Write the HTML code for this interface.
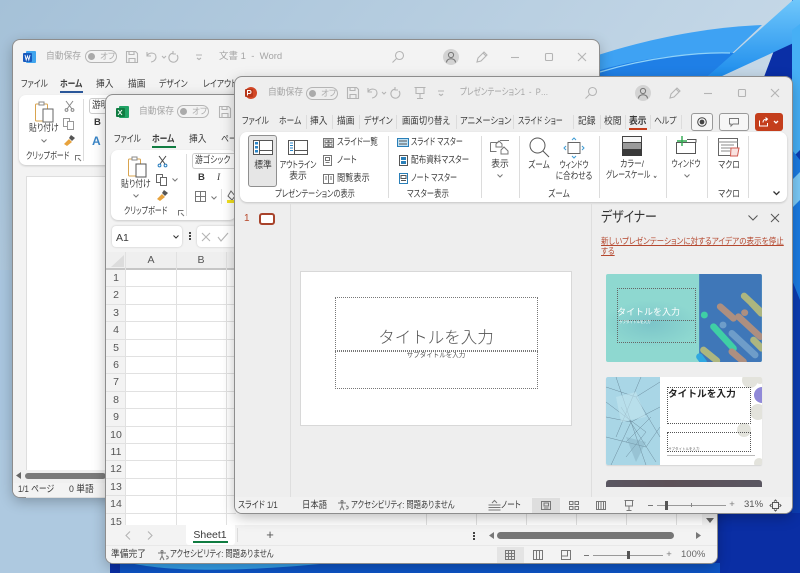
<!DOCTYPE html>
<html lang="ja"><head><meta charset="utf-8"><title>Office</title>
<style>
html,body{margin:0;padding:0;width:800px;height:573px;overflow:hidden;background:#a9c4da}
*{box-sizing:border-box}
body{font-family:"Liberation Sans","Noto Sans CJK JP",sans-serif;font-size:9.5px;color:#3a3a3a;font-feature-settings:"palt";position:relative}
.t{position:absolute;white-space:nowrap;line-height:14px;height:14px;--s:.82;transform:scaleX(var(--s));transform-origin:0 50%}
.k{--s:.74}
.j{--s:.92}
.n{--s:1}
.c{transform:translateX(-50%) scaleX(var(--s));transform-origin:50% 50%}
.g{color:#a5a5a5}
.b{position:absolute}
.win{position:absolute;border-radius:7px;box-shadow:0 0 0 1px #8d8d8d,0 4px 14px rgba(0,0,0,.28)}
.rib{position:absolute;background:#fff;border-radius:7px;box-shadow:0 1px 2px rgba(0,0,0,.18)}
.tog{position:absolute;width:32px;height:13px;border:1px solid #b5b5b5;border-radius:7px}
.tog i{position:absolute;left:2px;top:2px;width:7px;height:7px;border-radius:50%;background:#aaa}
.tog span{position:absolute;left:14px;top:-1px;font-size:8.5px;line-height:12px;color:#aaa}
.sep{position:absolute;width:1px;background:#dcdcdc}
svg{position:absolute;overflow:visible}
.ic{fill:none;stroke:#777;stroke-width:1}
.ti{fill:none;stroke:#b4b4b4;stroke-width:1.1}
.hl{position:absolute;height:1px;background:#e1e1e1}
.vl{position:absolute;width:1px;background:#e1e1e1}
.r{font-size:10.5px;color:#555;--s:1}
</style></head><body>
<svg width="800" height="573" style="left:0;top:0">
<defs><linearGradient id="w0" x1="0" y1="0" x2="1" y2=".6"><stop offset="0" stop-color="#a5c1d8"/><stop offset="1" stop-color="#cfdfec"/></linearGradient>
<linearGradient id="w2" x1="0" y1="0" x2="0" y2="1"><stop offset="0" stop-color="#6fc7fb"/><stop offset="1" stop-color="#1d8cec"/></linearGradient></defs>
<rect width="800" height="573" fill="url(#w0)"/>
<rect x="0" y="270" width="110" height="303" fill="#a9c6df"/>
<path d="M595 56C650 38 710 27 762 25L707 77H595Z" fill="#3ea2f3"/>
<path d="M600 70C650 56 700 52 735 53L707 77H600Z" fill="#1f7fe6"/>
<path d="M600 72C650 57 700 52 730 53" fill="none" stroke="#8fd2f8" stroke-width="1.2"/>
<path d="M793 0H800V573H100V560L680 300Z" fill="#0a2fa6"/>
<rect x="792" y="0" width="8" height="573" fill="#0c3db2"/>
<path d="M793 0H800V40L720 77H707Z" fill="url(#w2)"/>
<path d="M792 30L800 24V150L792 158Z" fill="#46aff5"/>
<path d="M792 150L800 160V300L792 280Z" fill="#1a7be2"/>
<path d="M792 180L800 172V200L792 208Z" fill="#7ccbf8"/>
<rect x="717" y="513" width="83" height="60" fill="#0a2ea4"/>
<rect x="120" y="563" width="600" height="10" fill="#0d55c8"/>
<path d="M130 563C170 572 240 572 330 563Z" fill="#37a2ec"/>
<path d="M0 440H110V573H0Z" fill="#aec9e0"/>
</svg>

<!-- WORD -->
<div class="win" style="left:13px;top:40px;width:586px;height:457px;background:#f3f3f3"></div>
<svg width="14" height="13" style="left:23px;top:51px"><rect x="3" y="0" width="10" height="12" rx="1" fill="#41a5ee"/><rect x="0" y="2" width="9" height="9" rx="1" fill="#185abd"/><path d="M2 4l1.2 5 1.3-4 1.3 4L7 4" fill="none" stroke="#fff" stroke-width=".9"/></svg>
<span class="t g j" style="left:46px;top:50px">自動保存</span>
<div class="tog" style="left:85px;top:50px"><i></i><span>オフ</span></div>
<svg width="12" height="12" style="left:126px;top:51px" class="ti"><path d="M.5.5h9l2 2v9H.5zM3 .5v3h5v-3M3 11.5v-4h6v4"/></svg>
<svg width="34" height="12" style="left:146px;top:51px" class="ti"><path d="M1 1v4h4M1 5c2-4 9-4 9 1 0 3-3 5-5 5"/><path d="M16 5l2 2 2-2M27 2.200A4.500 4.500 0 1 0 31 4M27 0v3h3"/></svg>
<svg width="8" height="6" style="left:195px;top:54px" class="ti"><path d="M1 1h6M2 4l2 1.500L6 4"/></svg>
<span class="t g n" style="left:219px;top:50px">文書 1 &nbsp;-&nbsp; Word</span>
<svg width="12" height="12" style="left:392px;top:51px" class="ti"><circle cx="7.500" cy="4.500" r="4"/><path d="M4.500 7.500L.5 11.500"/></svg>
<div class="b" style="left:443px;top:49px;width:16px;height:16px;border-radius:50%;background:#d3d3d3"></div>
<svg width="10" height="11" style="left:446px;top:52px" class="ic"><circle cx="5" cy="3" r="2.600"/><path d="M.5 10.500c0-5 9-5 9 0"/></svg>
<svg width="12" height="12" style="left:476px;top:51px" class="ti"><path d="M1 11l1-4 6-6 3 3-6 6zM7 2l3 3"/></svg>
<svg width="8" height="2" style="left:511px;top:57px" class="ti"><path d="M0 .5h8"/></svg>
<svg width="8" height="8" style="left:545px;top:53px" class="ti"><rect x=".5" y=".5" width="7" height="7" rx="1"/></svg>
<svg width="8" height="8" style="left:578px;top:53px" class="ti"><path d="M0 0l8 8M8 0L0 8"/></svg>
<span class="t" style="left:21px;top:78px">ファイル</span>
<span class="t" style="left:60px;top:78px;font-weight:bold">ホーム</span>
<div class="b" style="left:60px;top:91px;width:23px;height:2px;background:#2b579a"></div>
<span class="t j" style="left:96px;top:78px">挿入</span>
<span class="t j" style="left:128px;top:78px">描画</span>
<span class="t" style="left:159px;top:78px">デザイン</span>
<span class="t" style="left:203px;top:78px">レイアウト</span>
<div class="rib" style="left:19px;top:95px;width:574px;height:70px"></div>
<svg width="20" height="22" style="left:35px;top:101px"><rect x=".5" y="3" width="12" height="17" rx="1" fill="none" stroke="#d9a44f"/><rect x="4" y="1" width="5" height="3" fill="#fff" stroke="#888"/><rect x="8" y="8" width="10" height="13" fill="#fff" stroke="#666"/></svg>
<span class="t" style="left:29px;top:122px">貼り付け</span>
<svg width="6" height="4" style="left:41px;top:139px" class="ic"><path d="M.5.5L3 3 5.500.5"/></svg>
<svg width="9" height="11" style="left:65px;top:101px" fill="none" stroke="#888"><path d="M1 0l6 8M8 0L2 8"/><circle cx="1.500" cy="9" r="1.400"/><circle cx="7.500" cy="9" r="1.400"/></svg>
<svg width="12" height="12" style="left:63px;top:118px" fill="#fff" stroke="#999"><rect x=".5" y=".5" width="6" height="8"/><rect x="4.500" y="3.500" width="6" height="8"/></svg>
<svg width="12" height="12" style="left:64px;top:135px"><path d="M7 0l4 3-3 3-3-3z" fill="#555"/><path d="M5 4l3 3-5 4-3-2z" fill="#e8a33d"/></svg>
<span class="t k" style="left:26px;top:150px">クリップボード</span>
<svg width="6" height="6" style="left:75px;top:155px" class="ic"><path d="M.5 5.500v-5h5M3 3l3 3"/></svg>
<div class="sep" style="left:83px;top:99px;height:62px"></div>
<div class="b" style="left:89px;top:98px;width:20px;height:16px;border:1px solid #ccc;border-radius:3px"></div>
<span class="t j" style="left:92px;top:99px">游明</span>
<span class="t n" style="left:94px;top:116px;font-weight:bold">B</span>
<span class="t n" style="left:92px;top:134px;font-weight:bold;font-size:12px;color:#3a86c8">A</span>
<div class="b" style="left:27px;top:177px;width:79px;height:320px;background:#fff;box-shadow:0 0 0 1px #dedede"></div>
<div class="b" style="left:13px;top:483px;width:93px;height:14px;background:#f3f3f3;border-radius:0 0 0 7px"></div>
<div class="b" style="left:13px;top:470px;width:93px;height:13px;background:#f0f0f0"></div>
<svg width="5" height="7" style="left:16px;top:472px"><path d="M5 0v7L0 3.500z" fill="#666"/></svg>
<div class="b" style="left:25px;top:473px;width:81px;height:6px;border-radius:3px;background:#7b7b7b"></div>
<span class="t" style="left:18px;top:483px">1/1 ページ</span>
<span class="t j" style="left:69px;top:483px">0 単語</span>

<!-- EXCEL -->
<div class="win" style="left:106px;top:95px;width:611px;height:468px;background:#f3f3f3"></div>
<svg width="14" height="13" style="left:116px;top:106px"><rect x="3" y="0" width="10" height="12" rx="1" fill="#21a366"/><rect x="0" y="2" width="9" height="9" rx="1" fill="#107c41"/><path d="M2 4l4 5M6 4L2 9" fill="none" stroke="#fff"/></svg>
<span class="t g j" style="left:139px;top:105px">自動保存</span>
<div class="tog" style="left:177px;top:105px"><i></i><span>オフ</span></div>
<svg width="12" height="12" style="left:219px;top:106px" class="ti"><path d="M.5.5h9l2 2v9H.5zM3 .5v3h5v-3M3 11.500v-4h6v4"/></svg>
<span class="t" style="left:114px;top:133px">ファイル</span>
<span class="t" style="left:152px;top:133px;font-weight:bold">ホーム</span>
<div class="b" style="left:152px;top:146px;width:24px;height:2px;background:#107c41"></div>
<span class="t j" style="left:189px;top:133px">挿入</span>
<span class="t" style="left:221px;top:133px">ページ</span>
<div class="rib" style="left:111px;top:150px;width:125px;height:70px"></div>
<svg width="20" height="22" style="left:128px;top:156px"><rect x=".5" y="3" width="12" height="17" rx="1" fill="none" stroke="#d9a44f"/><rect x="4" y="1" width="5" height="3" fill="#fff" stroke="#888"/><rect x="8" y="8" width="10" height="13" fill="#fff" stroke="#555"/></svg>
<span class="t" style="left:121px;top:178px">貼り付け</span>
<svg width="6" height="4" style="left:133px;top:194px" class="ic"><path d="M.5.5L3 3 5.500.5"/></svg>
<svg width="9" height="12" style="left:158px;top:156px" fill="none" stroke="#444"><path d="M1 0l6 8M8 0L2 8"/><circle cx="1.500" cy="9.500" r="1.400" stroke="#2a7fc0"/><circle cx="7.500" cy="9.500" r="1.400" stroke="#2a7fc0"/></svg>
<svg width="12" height="12" style="left:156px;top:174px" fill="#fff" stroke="#666"><rect x=".5" y=".5" width="6" height="8"/><rect x="4.500" y="3.500" width="6" height="8"/></svg>
<svg width="6" height="4" style="left:172px;top:178px" class="ic"><path d="M.5.5L3 3 5.500.5"/></svg>
<svg width="12" height="12" style="left:157px;top:190px"><path d="M7 0l4 3-3 3-3-3z" fill="#555"/><path d="M5 4l3 3-5 4-3-2z" fill="#e8a33d"/></svg>
<span class="t k" style="left:124px;top:205px">クリップボード</span>
<svg width="6" height="6" style="left:178px;top:210px" class="ic"><path d="M.5 5.500v-5h5M3 3l3 3"/></svg>
<div class="sep" style="left:186px;top:154px;height:62px"></div>
<div class="b" style="left:192px;top:153px;width:44px;height:16px;border:1px solid #ccc;border-radius:3px 0 0 3px;border-right:0"></div>
<span class="t" style="left:195px;top:154px">游ゴシック</span>
<span class="t n" style="left:198px;top:171px;font-weight:bold">B</span>
<span class="t n" style="left:217px;top:171px;font-style:italic;font-family:'Liberation Serif',serif">I</span>
<svg width="11" height="11" style="left:195px;top:191px" class="ic"><path d="M.5.5h10v10H.5zM5.500.5v10M.5 5.500h10"/></svg>
<svg width="6" height="4" style="left:211px;top:196px" class="ic"><path d="M.5.5L3 3 5.500.5"/></svg>
<div class="sep" style="left:221px;top:189px;height:15px"></div>
<svg width="9" height="12" style="left:227px;top:191px"><path d="M4 0l4 5-3 4-4-4z" fill="none" stroke="#666"/><rect x="0" y="9" width="9" height="3" fill="#f2e01e"/></svg>
<div class="b" style="left:112px;top:226px;width:70px;height:21px;background:#fff;border-radius:4px;box-shadow:0 0 2px rgba(0,0,0,.2)"></div>
<span class="t n" style="left:116px;top:231px;font-size:10.500px">A1</span>
<svg width="6" height="4" style="left:173px;top:235px" fill="none" stroke="#333"><path d="M.5.5L3 3 5.500.5"/></svg>
<div class="b" style="left:189px;top:232px;width:2px;height:8px;border-left:2px dotted #444"></div>
<div class="b" style="left:197px;top:226px;width:40px;height:21px;background:#fff;border-radius:4px;box-shadow:0 0 2px rgba(0,0,0,.2)"></div>
<svg width="28" height="10" style="left:201px;top:232px" class="ti"><path d="M1 1l8 8M9 1L1 9M17 5l3 4 7-8"/></svg>
<!-- grid -->
<div class="b" style="left:106px;top:252px;width:611px;height:16px;background:#efefef"></div>
<div class="b" style="left:106px;top:268px;width:19px;height:257px;background:#f3f3f3"></div>
<div class="b" style="left:125px;top:269px;width:577px;height:256px;background:#fff"></div>
<div class="b" style="left:106px;top:268px;width:596px;height:2px;background:#c6c6c6"></div>
<div class="b" style="left:702px;top:252px;width:15px;height:273px;background:#f3f3f3"></div>
<svg width="14" height="12" style="left:111px;top:255px"><path d="M13 0v12H0z" fill="#dcdcdc"/></svg>
<span class="t c r" style="left:151px;top:253px">A</span>
<span class="t c r" style="left:201px;top:253px">B</span>
<div class="vl" style="left:125px;top:252px;height:273px"></div><div class="vl" style="left:176px;top:252px;height:273px"></div><div class="vl" style="left:226px;top:252px;height:273px"></div>
<div class="vl" style="left:426px;top:513px;height:12px"></div><div class="vl" style="left:476px;top:513px;height:12px"></div><div class="vl" style="left:526px;top:513px;height:12px"></div><div class="vl" style="left:576px;top:513px;height:12px"></div><div class="vl" style="left:626px;top:513px;height:12px"></div><div class="vl" style="left:676px;top:513px;height:12px"></div>
<div class="hl" style="left:106px;top:286px;width:130px"></div><div class="hl" style="left:106px;top:304px;width:130px"></div><div class="hl" style="left:106px;top:321px;width:130px"></div><div class="hl" style="left:106px;top:339px;width:130px"></div><div class="hl" style="left:106px;top:356px;width:130px"></div><div class="hl" style="left:106px;top:373px;width:130px"></div><div class="hl" style="left:106px;top:391px;width:130px"></div><div class="hl" style="left:106px;top:408px;width:130px"></div><div class="hl" style="left:106px;top:426px;width:130px"></div><div class="hl" style="left:106px;top:443px;width:130px"></div><div class="hl" style="left:106px;top:460px;width:130px"></div><div class="hl" style="left:106px;top:478px;width:130px"></div><div class="hl" style="left:106px;top:495px;width:130px"></div><div class="hl" style="left:106px;top:513px;width:130px"></div>
<span class="t c r" style="left:116px;top:271px">1</span>
<span class="t c r" style="left:116px;top:288px">2</span>
<span class="t c r" style="left:116px;top:306px">3</span>
<span class="t c r" style="left:116px;top:323px">4</span>
<span class="t c r" style="left:116px;top:341px">5</span>
<span class="t c r" style="left:116px;top:358px">6</span>
<span class="t c r" style="left:116px;top:375px">7</span>
<span class="t c r" style="left:116px;top:393px">8</span>
<span class="t c r" style="left:116px;top:410px">9</span>
<span class="t c r" style="left:116px;top:428px">10</span>
<span class="t c r" style="left:116px;top:445px">11</span>
<span class="t c r" style="left:116px;top:462px">12</span>
<span class="t c r" style="left:116px;top:480px">13</span>
<span class="t c r" style="left:116px;top:497px">14</span>
<span class="t c r" style="left:116px;top:515px">15</span>
<svg width="8" height="6" style="left:706px;top:518px"><path d="M0 0h8L4 5z" fill="#666"/></svg>
<div class="b" style="left:106px;top:525px;width:611px;height:38px;background:#f3f3f3;border-radius:0 0 7px 7px"></div>
<div class="b" style="left:106px;top:545px;width:611px;height:1px;background:#e8e8e8"></div>
<svg width="30" height="9" style="left:125px;top:531px" class="ti"><path d="M5 .5L1 4.500l4 4M23 .5l4 4-4 4"/></svg>
<div class="b" style="left:186px;top:525px;width:49px;height:20px;background:#fff;border-radius:0 0 3px 3px"></div>
<span class="t c n" style="left:210px;top:528px;font-size:10.500px">Sheet1</span>
<div class="b" style="left:193px;top:541px;width:35px;height:2px;background:#107c41"></div>
<div class="sep" style="left:237px;top:528px;height:14px"></div>
<span class="t c n" style="left:270px;top:528px;font-size:13px;color:#555">+</span>
<div class="b" style="left:473px;top:532px;width:2px;height:8px;border-left:2px dotted #444"></div>
<svg width="5" height="7" style="left:489px;top:532px"><path d="M5 0v7L0 3.500z" fill="#777"/></svg>
<div class="b" style="left:497px;top:532px;width:177px;height:7px;border-radius:4px;background:#767676"></div>
<svg width="5" height="7" style="left:696px;top:532px"><path d="M0 0v7l5-3.500z" fill="#777"/></svg>
<span class="t j" style="left:111px;top:548px">準備完了</span>
<svg width="11" height="11" style="left:158px;top:550px" class="ic"><circle cx="4" cy="1.500" r="1"/><path d="M0 3h8M4 3v3l-2 4M4 6l2 4M8 6c3 0 3 3 0 3"/></svg>
<span class="t k" style="left:170px;top:548px;--s:.77">アクセシビリティ: 問題ありません</span>
<div class="b" style="left:497px;top:547px;width:27px;height:16px;background:#e4e4e4"></div>
<svg width="10" height="10" style="left:505px;top:550px" class="ic" stroke="#444"><path d="M.5.5h9v9h-9zM3.500.5v9M6.500.5v9M.5 3.500h9M.5 6.500h9"/></svg>
<svg width="10" height="10" style="left:533px;top:550px" class="ic"><path d="M.5.5h9v9h-9zM3.500.5v9M6.500.5v9"/></svg>
<svg width="10" height="10" style="left:561px;top:550px" class="ic"><path d="M.5.5h9v9h-9zM6.500.5v5.500h-6"/></svg>
<div class="b" style="left:584px;top:555px;width:5px;height:1px;background:#777"></div>
<div class="b" style="left:593px;top:555px;width:70px;height:1px;background:#999"></div>
<div class="b" style="left:627px;top:551px;width:3px;height:8px;background:#555"></div>
<span class="t c n" style="left:669px;top:548px;color:#777">+</span>
<span class="t n" style="left:681px;top:548px;color:#666">100%</span>

<!-- POWERPOINT -->
<div class="win" style="left:235px;top:77px;width:557px;height:436px;background:#eeeeee"></div>
<svg width="14" height="14" style="left:244px;top:86px"><circle cx="7" cy="7" r="6" fill="#d24726"/><rect x="1" y="3" width="8" height="8" rx="1" fill="#b7361a"/><path d="M3.500 9.500v-5h2a1.500 1.500 0 0 1 0 3h-2" fill="none" stroke="#fff"/></svg>
<span class="t g j" style="left:268px;top:86px">自動保存</span>
<div class="tog" style="left:306px;top:87px"><i></i><span>オフ</span></div>
<svg width="12" height="12" style="left:347px;top:87px" class="ti"><path d="M.5.5h9l2 2v9H.5zM3 .5v3h5v-3M3 11.500v-4h6v4"/></svg>
<svg width="40" height="12" style="left:367px;top:87px" class="ti"><path d="M1 1v4h4M1 5c2-4 9-4 9 1 0 3-3 5-5 5"/><path d="M15 5l2 2 2-2M28 2.200A4.500 4.500 0 1 0 32 4M28 0v3h3"/></svg>
<svg width="12" height="12" style="left:414px;top:87px" class="ti"><path d="M.5.500h11M2 .500v6h8v-6M6 6.500v5M3 11.500h6"/></svg>
<svg width="8" height="6" style="left:437px;top:90px" class="ti"><path d="M1 1h6M2 4l2 1.500L6 4"/></svg>
<span class="t g k" style="left:460px;top:86px;--s:.79">プレゼンテーション1 &nbsp;-&nbsp; P…</span>
<svg width="12" height="12" style="left:585px;top:87px" class="ti"><circle cx="7.500" cy="4.500" r="4"/><path d="M4.500 7.500L.5 11.500"/></svg>
<div class="b" style="left:635px;top:85px;width:16px;height:16px;border-radius:50%;background:#d3d3d3"></div>
<svg width="10" height="11" style="left:638px;top:88px" class="ic"><circle cx="5" cy="3" r="2.600"/><path d="M.5 10.500c0-5 9-5 9 0"/></svg>
<svg width="12" height="12" style="left:669px;top:87px" class="ti"><path d="M1 11l1-4 6-6 3 3-6 6zM7 2l3 3"/></svg>
<svg width="8" height="2" style="left:704px;top:93px" class="ti"><path d="M0 .5h8"/></svg>
<svg width="8" height="8" style="left:738px;top:89px" class="ti"><rect x=".5" y=".5" width="7" height="7" rx="1"/></svg>
<svg width="8" height="8" style="left:771px;top:89px" class="ti"><path d="M0 0l8 8M8 0L0 8"/></svg>
<span class="t" style="left:242px;top:115px">ファイル</span>
<span class="t" style="left:279px;top:115px">ホーム</span>
<span class="t j" style="left:310px;top:115px">挿入</span>
<span class="t j" style="left:337px;top:115px">描画</span>
<span class="t" style="left:364px;top:115px">デザイン</span>
<span class="t" style="left:402px;top:115px;--s:.88">画面切り替え</span>
<span class="t" style="left:460px;top:115px;--s:.87">アニメーション</span>
<span class="t k" style="left:518px;top:115px">スライド ショー</span>
<span class="t j" style="left:578px;top:115px">記録</span>
<span class="t j" style="left:604px;top:115px">校閲</span>
<span class="t j" style="left:629px;top:115px;font-weight:bold">表示</span>
<div class="b" style="left:629px;top:128px;width:18px;height:2px;background:#c43e1c"></div>
<span class="t" style="left:654px;top:115px">ヘルプ</span>
<div class="sep" style="left:306px;top:115px;height:14px"></div><div class="sep" style="left:332px;top:115px;height:14px"></div><div class="sep" style="left:359px;top:115px;height:14px"></div><div class="sep" style="left:396px;top:115px;height:14px"></div><div class="sep" style="left:456px;top:115px;height:14px"></div><div class="sep" style="left:513px;top:115px;height:14px"></div><div class="sep" style="left:573px;top:115px;height:14px"></div><div class="sep" style="left:600px;top:115px;height:14px"></div><div class="sep" style="left:625px;top:115px;height:14px"></div><div class="sep" style="left:650px;top:115px;height:14px"></div><div class="sep" style="left:681px;top:115px;height:14px"></div>
<div class="b" style="left:691px;top:113px;width:22px;height:18px;border:1px solid #999;border-radius:3px;background:#f6f6f6"></div>
<svg width="10" height="10" style="left:697px;top:117px"><circle cx="5" cy="5" r="4.300" fill="none" stroke="#444"/><circle cx="5" cy="5" r="2.400" fill="#444"/></svg>
<div class="b" style="left:719px;top:113px;width:30px;height:18px;border:1px solid #999;border-radius:3px;background:#f6f6f6"></div>
<svg width="10" height="9" style="left:729px;top:118px" class="ic" stroke="#444"><path d="M.5.5h9v5.500H4L2 8V6H.5z"/></svg>
<div class="b" style="left:755px;top:113px;width:28px;height:18px;border-radius:3px;background:#c43e1c"></div>
<svg width="22" height="10" style="left:759px;top:117px" fill="none" stroke="#fff"><path d="M.5 3.500v5.500h8V6M4 5.500C4 3 6 2 8 2M6.500.5L8.500 2 6.500 4"/><path d="M15 4l2 2 2-2" stroke-width="1.300"/></svg>
<div class="rib" style="left:240px;top:132px;width:547px;height:70px"></div>
<div class="b" style="left:248px;top:135px;width:29px;height:52px;border:1px solid #8f8f8f;border-radius:3px;background:#e6e6e6"></div>
<svg width="20" height="16" style="left:253px;top:140px"><rect x=".5" y=".5" width="19" height="14" fill="#fff" stroke="#555"/><path d="M6.500.5v14M6.500 10.500h13" stroke="#555"/><rect x="2" y="2" width="3" height="2.500" fill="#2a86c8"/><rect x="2" y="6" width="3" height="2.500" fill="#2a86c8"/><rect x="2" y="10" width="3" height="2.500" fill="#2a86c8"/></svg>
<span class="t c j" style="left:263px;top:159px">標準</span>
<svg width="20" height="16" style="left:288px;top:140px"><rect x=".5" y=".5" width="19" height="14" fill="#fff" stroke="#555"/><path d="M6.500.5v14M6.500 10.500h13" stroke="#555"/><path d="M2 3h3M2 5.500h3M2 8h3M2 10.500h3" stroke="#2a86c8"/></svg>
<span class="t c k" style="left:298px;top:159px">アウトライン</span>
<span class="t c j" style="left:298px;top:170px">表示</span>
<svg width="11" height="10" style="left:323px;top:138px" class="ic" stroke="#555"><path d="M.5.5h10v9H.5zM2 2h3v2.500H2zM6 2h3v2.500H6zM2 6h3v2.500H2zM6 6h3v2.500H6z"/></svg>
<span class="t" style="left:337px;top:136px;--s:.79">スライド一覧</span>
<svg width="9" height="11" style="left:323px;top:155px" class="ic" stroke="#555"><path d="M.5.5h8v10H.5zM2.500 2.500h4v3h-4zM2.500 7.500h4"/></svg>
<span class="t" style="left:337px;top:154px">ノート</span>
<svg width="11" height="10" style="left:323px;top:174px" class="ic" stroke="#555"><path d="M.5.5h10v9H.5zM5.500.5v9M2 3h2M2 5h2M7 3h2M7 5h2"/></svg>
<span class="t" style="left:337px;top:172px;--s:.86">閲覧表示</span>
<span class="t c" style="left:315px;top:188px;--s:.76">プレゼンテーションの表示</span>
<div class="sep" style="left:388px;top:136px;height:62px"></div>
<svg width="12" height="10" style="left:397px;top:138px"><rect x=".5" y=".5" width="11" height="8" fill="#bfe0f2" stroke="#2a7fb8"/><path d="M2 3h8M2 6h8" stroke="#555"/></svg>
<span class="t k" style="left:411px;top:136px">スライド マスター</span>
<svg width="9" height="12" style="left:399px;top:155px"><rect x=".5" y=".5" width="8" height="10" fill="#fff" stroke="#555"/><rect x="2" y="2" width="5" height="3" fill="#2a7fb8"/><rect x="2" y="6" width="5" height="3" fill="#2a7fb8"/></svg>
<span class="t" style="left:411px;top:154px;--s:.8">配布資料マスター</span>
<svg width="9" height="12" style="left:399px;top:173px"><rect x=".5" y=".5" width="8" height="10" fill="#fff" stroke="#2a7fb8"/><path d="M2 2.500h5v3H2zM2 7.500h5" stroke="#555" fill="none"/></svg>
<span class="t k" style="left:411px;top:172px;--s:.75">ノート マスター</span>
<span class="t c" style="left:428px;top:188px;--s:.78">マスター表示</span>
<div class="sep" style="left:481px;top:136px;height:62px"></div>
<svg width="20" height="16" style="left:490px;top:139px" class="ic" stroke="#555"><path d="M.5 3.500h8M.5 3.500v9h6M10 1.500h9M6 5l3-3 3 3v3H6zM11 11l3-3 4 4v3h-7z"/></svg>
<span class="t c j" style="left:500px;top:158px">表示</span>
<svg width="6" height="4" style="left:497px;top:174px" class="ic"><path d="M.5.5L3 3 5.500.5"/></svg>
<div class="sep" style="left:519px;top:136px;height:62px"></div>
<svg width="21" height="21" style="left:529px;top:137px" fill="none" stroke="#555"><circle cx="8.500" cy="8.500" r="7.500"/><path d="M14 14l6 6"/></svg>
<span class="t c" style="left:539px;top:159px;--s:.8">ズーム</span>
<svg width="20" height="20" style="left:564px;top:138px" fill="none"><rect x="4" y="4.500" width="12" height="11" stroke="#666"/><path d="M8 2l2-2 2 2M8 18l2 2 2-2M2 8L0 10l2 2M18 8l2 2-2 2" stroke="#3d9bd3"/></svg>
<span class="t c k" style="left:574px;top:159px;--s:.72">ウィンドウ</span>
<span class="t c" style="left:574px;top:170px;--s:.8">に合わせる</span>
<span class="t c" style="left:559px;top:188px;--s:.8">ズーム</span>
<div class="sep" style="left:599px;top:136px;height:62px"></div>
<svg width="20" height="20" style="left:622px;top:136px"><rect x="0" y="0" width="20" height="20" fill="#3a3a3a"/><rect x=".5" y=".5" width="19" height="6" fill="#f6f6f6" stroke="#444"/><rect x="1" y="7" width="18" height="6" fill="#9a9a9a"/></svg>
<span class="t c" style="left:632px;top:158px">カラー/</span>
<span class="t c" style="left:632px;top:169px;--s:.72">グレースケール ⌄</span>
<div class="sep" style="left:666px;top:136px;height:62px"></div>
<svg width="21" height="18" style="left:676px;top:136px"><path d="M.5 6.500h19v11H.5zM11 3.500h9v3" fill="none" stroke="#555"/><path d="M6 0v10M1 5h10" stroke="#2fa84f" stroke-width="1.400"/></svg>
<span class="t c k" style="left:686px;top:158px;--s:.72">ウィンドウ</span>
<svg width="6" height="4" style="left:684px;top:174px" class="ic"><path d="M.5.5L3 3 5.500.5"/></svg>
<div class="sep" style="left:707px;top:136px;height:62px"></div>
<svg width="22" height="20" style="left:718px;top:138px"><rect x=".5" y=".5" width="19" height="17" fill="#fff" stroke="#666"/><path d="M0 4h20M3 7h13M3 10h13M3 13h9" stroke="#888"/><path d="M13 10h8l-1.500 8h-7z" fill="#f9e2e0" stroke="#d05a50"/></svg>
<span class="t c" style="left:729px;top:159px">マクロ</span>
<span class="t c" style="left:729px;top:188px">マクロ</span>
<div class="sep" style="left:748px;top:136px;height:62px"></div>
<svg width="7" height="5" style="left:773px;top:191px" fill="none" stroke="#333" stroke-width="1.300"><path d="M.5.5L3.500 3.500 6.500.5"/></svg>
<span class="t n" style="left:244px;top:212px;color:#b7472a;font-size:10px">1</span>
<div class="b" style="left:259px;top:213px;width:16px;height:12px;border:2px solid #a8432b;border-radius:3px;background:#fff"></div>
<div class="b" style="left:290px;top:204px;width:1px;height:293px;background:#dedede"></div>
<div class="b" style="left:591px;top:204px;width:1px;height:293px;background:#dedede"></div>
<div class="b" style="left:301px;top:272px;width:270px;height:153px;background:#fff;box-shadow:0 0 0 1px #d8d8d8"></div>
<div class="b" style="left:335px;top:297px;width:203px;height:54px;border:1px dotted #777"></div>
<div class="b" style="left:335px;top:351px;width:203px;height:38px;border:1px dotted #777"></div>
<span class="t c n" style="left:436px;top:331px;font-size:16.500px;color:#555;font-feature-settings:normal;font-weight:300">タイトルを入力</span>
<span class="t c n" style="left:436px;top:349px;font-size:6.500px;color:#555;font-feature-settings:normal">サブタイトルを入力</span>
<span class="t" style="left:601px;top:211px;font-size:14.500px;color:#333">デザイナー</span>
<svg width="10" height="6" style="left:748px;top:215px" fill="none" stroke="#555"><path d="M.5.5L5 5 9.500.5"/></svg>
<svg width="8" height="8" style="left:771px;top:214px" fill="none" stroke="#555"><path d="M0 0l8 8M8 0L0 8"/></svg>
<span class="t" style="left:601px;top:234px;color:#b5482f;text-decoration:underline;font-size:8.800px;--s:.86">新しいプレゼンテーションに対するアイデアの表示を停止</span>
<span class="t" style="left:601px;top:244px;color:#b5482f;text-decoration:underline;font-size:8.800px;--s:.86">する</span>
<!-- card 1 -->
<div class="b" style="left:606px;top:274px;width:156px;height:88px;border-radius:2px;overflow:hidden;background:radial-gradient(ellipse 60px 30px at 45px 50px,#7cc5c9,#8ed8d0 80%)">
<svg width="156" height="88" viewBox="48 222 467 264" style="left:0;top:0"><rect x="327" y="222" width="188" height="264" fill="#3f77b8"/><g fill="none" stroke-linecap="round" stroke-width="20"><path d="M370 380l60 65" stroke="#3fcfa5"/><path d="M390 320l40 35" stroke="#ad8f80"/><path d="M462 288l45 42" stroke="#adb67f"/><path d="M425 400l70 65" stroke="#6e9dc9"/><path d="M445 350l65 60" stroke="#ad8f80"/><path d="M485 310l28 30" stroke="#adb67f"/><path d="M342 345h1" stroke="#3fcfa5"/><path d="M340 450l40 32" stroke="#adb67f"/><path d="M425 455l35 30" stroke="#ad8f80"/><path d="M490 420l25 25" stroke="#adb67f"/><path d="M398 375h1" stroke="#6e9dc9"/><path d="M463 338h1" stroke="#ad8f80"/><path d="M328 470l12 16" stroke="#2fa8e0"/></g></svg>
<div class="b" style="left:11px;top:14px;width:79px;height:55px;border:1px dotted #666"></div>
<div class="b" style="left:11px;top:46px;width:79px;height:1px;border-top:1px dotted #666"></div>
<span class="t n" style="left:11px;top:31px;color:#fff;font-size:9px;font-feature-settings:normal">タイトルを入力</span>
<span class="t n" style="left:13px;top:41px;color:#fff;font-size:3.500px;font-feature-settings:normal">サブタイトルを入力</span>
</div>
<!-- card 2 -->
<div class="b" style="left:606px;top:377px;width:156px;height:88px;border-radius:2px;overflow:hidden;background:#fff;box-shadow:0 1px 1px rgba(0,0,0,.1)">
<svg width="54" height="88" style="left:0;top:0"><rect width="54" height="88" fill="#a9d6e6"/><g fill="none" stroke="#6d8d9e" stroke-width=".5"><path d="M0 10L30 20 54 5M10 0L25 45 54 30M0 40L25 45 40 88M5 88L25 45M0 60L40 70 54 50M30 20L54 60M15 30L50 85M0 25L40 55 20 80M35 0L10 60M45 40L20 65"/></g><path d="M10 20L30 15 40 40 15 45z" fill="#c3e4ef" opacity=".6"/><path d="M20 60L40 65 30 85z" fill="#7fa7b8" opacity=".4"/></svg>
<svg width="102" height="88" style="left:54px;top:0" fill="#e3e3dc"><circle cx="90" cy="3" r="8"/><circle cx="100" cy="3" r="4"/><circle cx="98" cy="35" r="8"/><circle cx="84" cy="53" r="7"/><circle cx="99" cy="86" r="5"/><circle cx="102" cy="18" r="8" fill="#9089d8"/></svg>
<div class="b" style="left:61px;top:10px;width:84px;height:37px;border:1px dotted #555"></div>
<div class="b" style="left:61px;top:55px;width:84px;height:20px;border:1px dotted #555"></div>
<div class="b" style="left:61px;top:78px;width:88px;height:1px;background:#bbb"></div>
<span class="t n" style="left:62px;top:11px;font-size:9.700px;font-weight:bold;color:#222;font-feature-settings:normal">タイトルを入力</span>
<span class="t n" style="left:62px;top:65px;font-size:3.500px;color:#666;font-feature-settings:normal">サブタイトルを入力</span>
</div>
<div class="b" style="left:606px;top:480px;width:156px;height:7px;border-radius:3px 3px 0 0;background:linear-gradient(90deg,#5a5661,#5d5158 40%,#5a5661)"></div>
<div class="b" style="left:235px;top:497px;width:557px;height:16px;background:#f1f1f1;border-radius:0 0 7px 7px"></div>
<span class="t" style="left:238px;top:499px">スライド 1/1</span>
<span class="t" style="left:302px;top:499px;--s:.88">日本語</span>
<svg width="11" height="11" style="left:338px;top:500px" class="ic"><circle cx="4" cy="1.500" r="1"/><path d="M0 3h8M4 3v3l-2 4M4 6l2 4M8 6c3 0 3 3 0 3"/></svg>
<span class="t" style="left:351px;top:499px;--s:.77">アクセシビリティ: 問題ありません</span>
<svg width="13" height="11" style="left:488px;top:500px" class="ic"><path d="M4 3l2.500-2.500L9 3M.5 5h12M.5 7.500h12M.5 10h12"/></svg>
<span class="t" style="left:501px;top:499px">ノート</span>
<div class="b" style="left:532px;top:498px;width:28px;height:15px;background:#dedede"></div>
<svg width="10" height="9" style="left:541px;top:501px" class="ic" stroke="#444"><path d="M.5.5h9v8h-9zM3 2h4.500v3H3zM3 7h4.500"/></svg>
<svg width="10" height="9" style="left:569px;top:501px" class="ic" stroke="#555"><path d="M.5.5h3.500v3H.5zM6 .5h3.500v3H6zM.5 5.500h3.500v3H.5zM6 5.500h3.500v3H6z"/></svg>
<svg width="10" height="9" style="left:596px;top:501px" class="ic" stroke="#555"><path d="M.5.5h9v8h-9zM5 .5v8M2.500.5v8M7.500.5v8"/></svg>
<svg width="10" height="11" style="left:624px;top:500px" class="ic" stroke="#555"><path d="M.5.500h9M1.500.500v5.500h7V.500M5 6v4M2.500 10.500h5"/></svg>
<div class="b" style="left:648px;top:505px;width:5px;height:1px;background:#777"></div>
<div class="b" style="left:657px;top:505px;width:69px;height:1px;background:#999"></div>
<div class="b" style="left:665px;top:501px;width:3px;height:9px;background:#555"></div>
<div class="b" style="left:691px;top:503px;width:1px;height:4px;background:#888"></div>
<span class="t c n" style="left:732px;top:498px;color:#777">+</span>
<span class="t n" style="left:744px;top:498px;color:#555">31%</span>
<svg width="11" height="11" style="left:770px;top:500px" fill="none" stroke="#555"><rect x="2.500" y="2.500" width="6" height="6"/><path d="M4 1.500L5.500 0 7 1.500M4 9.500L5.500 11 7 9.500M1.500 4L0 5.500 1.500 7M9.500 4L11 5.500 9.500 7"/></svg>
</body></html>
